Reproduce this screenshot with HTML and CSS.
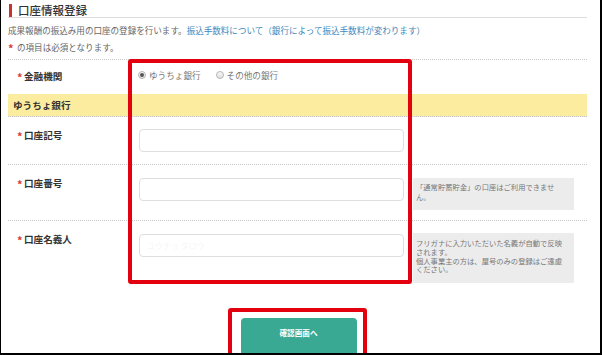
FILE: index.html
```html
<!DOCTYPE html>
<html lang="ja">
<head>
<meta charset="utf-8">
<title>口座情報登録</title>
<link rel="stylesheet" href="styles.css">
</head>
<body>
<div class="frame">
  <div class="page">
    <h2 class="title">口座情報登録</h2>
    <p class="lead">成果報酬の振込み用の口座の登録を行います。<a class="link" href="#">振込手数料について（銀行によって振込手数料が変わります）</a></p>
    <p class="req"><span class="ast">*</span>の項目は必須となります。</p>

    <div class="form">
      <div class="row row-bank">
        <div class="label"><span class="ast">*</span>金融機関</div>
        <div class="radios">
          <span class="radio"><span class="dot on"></span>ゆうちょ銀行</span>
          <span class="radio"><span class="dot"></span>その他の銀行</span>
        </div>
      </div>
      <div class="band">ゆうちょ銀行</div>
      <div class="row row-kigo">
        <div class="label"><span class="ast">*</span>口座記号</div>
        <div class="input"></div>
      </div>
      <div class="row row-bango">
        <div class="label"><span class="ast">*</span>口座番号</div>
        <div class="input"></div>
        <div class="note">「通常貯蓄貯金」の口座はご利用できません。</div>
      </div>
      <div class="row row-meigi">
        <div class="label"><span class="ast">*</span>口座名義人</div>
        <div class="input"><span class="ghost">ユウチョ タロウ</span></div>
        <div class="note">フリガナに入力いただいた名義が自動で反映されます。<br>個人事業主の方は、屋号のみの登録はご遠慮ください。</div>
      </div>
    </div>

    <div class="actions">
      <button class="btn" type="button">確認画面へ</button>
    </div>
  </div>
  <div class="hl hl-form"></div>
  <div class="hl hl-btn"></div>
</div>
</body>
</html>
```

FILE: styles.css
```css
* { box-sizing: border-box; }

html, body {
  margin: 0;
  padding: 0;
  background: #fff;
}

body {
  font-family: "Noto Sans CJK JP", "Noto Sans", sans-serif;
  color: #555;
}

.frame {
  position: relative;
  width: 602px;
  height: 355px;
  overflow: hidden;
  border-left: 1px solid #000;
  border-right: 2px solid #000;
  border-bottom: 2px solid #000;
  background: #fff;
}

.page {
  width: 586px;
  padding-left: 7px;
}

.title {
  display: flex;
  align-items: center;
  height: 14px;
  margin: 4px 0 0;
  font-size: 11.5px;
  font-weight: 500;
  line-height: 13px;
  color: #333;
  border-bottom: 1px solid #dcdcdc;
}

.title::before {
  content: "";
  width: 3px;
  height: 13px;
  margin: 0 6px 0 1px;
  background: #c8332f;
  align-self: flex-start;
}

.lead {
  margin: 6px 0 0;
  font-size: 8.55px;
  line-height: 13px;
  color: #666;
  white-space: nowrap;
}

.link {
  color: #3d88bd;
  text-decoration: none;
}

.req {
  margin: 4px 0 0;
  font-size: 8.55px;
  line-height: 13px;
  color: #666;
}

.ast {
  display: inline-block;
  width: 7px;
  color: #d8403a;
  font-weight: 700;
  font-size: 11px;
  line-height: 10px;
  vertical-align: -2px;
}

.req .ast { width: 9px; }

.form {
  margin-top: 5px;
  border-top: 1px dotted #c8c8c8;
}

.row {
  display: grid;
  grid-template-columns: 122px 265px 161px;
  column-gap: 9px;
  align-items: start;
  border-bottom: 1px dotted #c8c8c8;
  padding-top: 13px;
}

.label {
  padding-left: 9px;
  font-size: 9.6px;
  font-weight: 700;
  line-height: 12px;
  color: #333;
  white-space: nowrap;
}

.row-bank {
  height: 34px;
  border-bottom: none;
  padding-top: 11px;
}

.radios {
  display: flex;
  gap: 15px;
  margin-left: -1px;
  margin-top: -2px;
  font-size: 8.6px;
  line-height: 12px;
  color: #777;
}

.radio {
  display: inline-flex;
  align-items: center;
  gap: 3px;
}

.dot {
  width: 8px;
  height: 8px;
  border-radius: 50%;
  border: 1px solid #b5b5b5;
  background: linear-gradient(#fafafa, #dedede);
  display: inline-flex;
  align-items: center;
  justify-content: center;
}

.dot.on::after {
  content: "";
  width: 4px;
  height: 4px;
  border-radius: 50%;
  background: #555;
}

.band {
  height: 23px;
  padding-left: 5px;
  background: #fcec9f;
  border-bottom: 1px dotted #c8c8c8;
  font-size: 9.6px;
  font-weight: 700;
  line-height: 22px;
  color: #333;
}

.row-kigo {
  height: 48px;
  padding-top: 12px;
}

.row-kigo .label { padding-top: 1px; }

.row-bango { height: 56px; }

.row-meigi {
  height: 70px;
  border-bottom: none;
}

.row .label { margin-top: -1px; }

.input {
  height: 23px;
  border: 1px solid #dedede;
  border-radius: 4px;
  background: #fff;
  padding: 5px 7px;
  font-size: 8px;
  line-height: 12px;
}

.ghost { color: #f6f6f6; }

.note {
  background: #ececec;
  padding: 5px 11px 8px 3px;
  font-size: 7.3px;
  line-height: 9.5px;
  color: #777;
  min-height: 30px;
}

.row-meigi .note {
  margin-top: -1px;
  height: 50px;
  padding-top: 6px;
  line-height: 8.8px;
}

.actions {
  display: flex;
  justify-content: center;
  padding-top: 27px;
  padding-left: 2px;
}

.btn {
  width: 116px;
  height: 44px;
  border: none;
  border-radius: 4px;
  background: #39a994;
  color: #fff;
  font-family: "Noto Sans CJK JP", "Noto Sans", sans-serif;
  font-size: 7.6px;
  font-weight: 700;
  line-height: 12px;
  padding: 9px 0 0;
  display: flex;
  justify-content: center;
  align-items: flex-start;
}

.hl {
  position: absolute;
  border: 4px solid #e3000f;
  border-radius: 3px;
}

.hl-form {
  left: 127px;
  top: 59px;
  width: 284px;
  height: 225px;
}

.hl-btn {
  left: 227px;
  top: 308px;
  width: 139px;
  height: 60px;
}
```
